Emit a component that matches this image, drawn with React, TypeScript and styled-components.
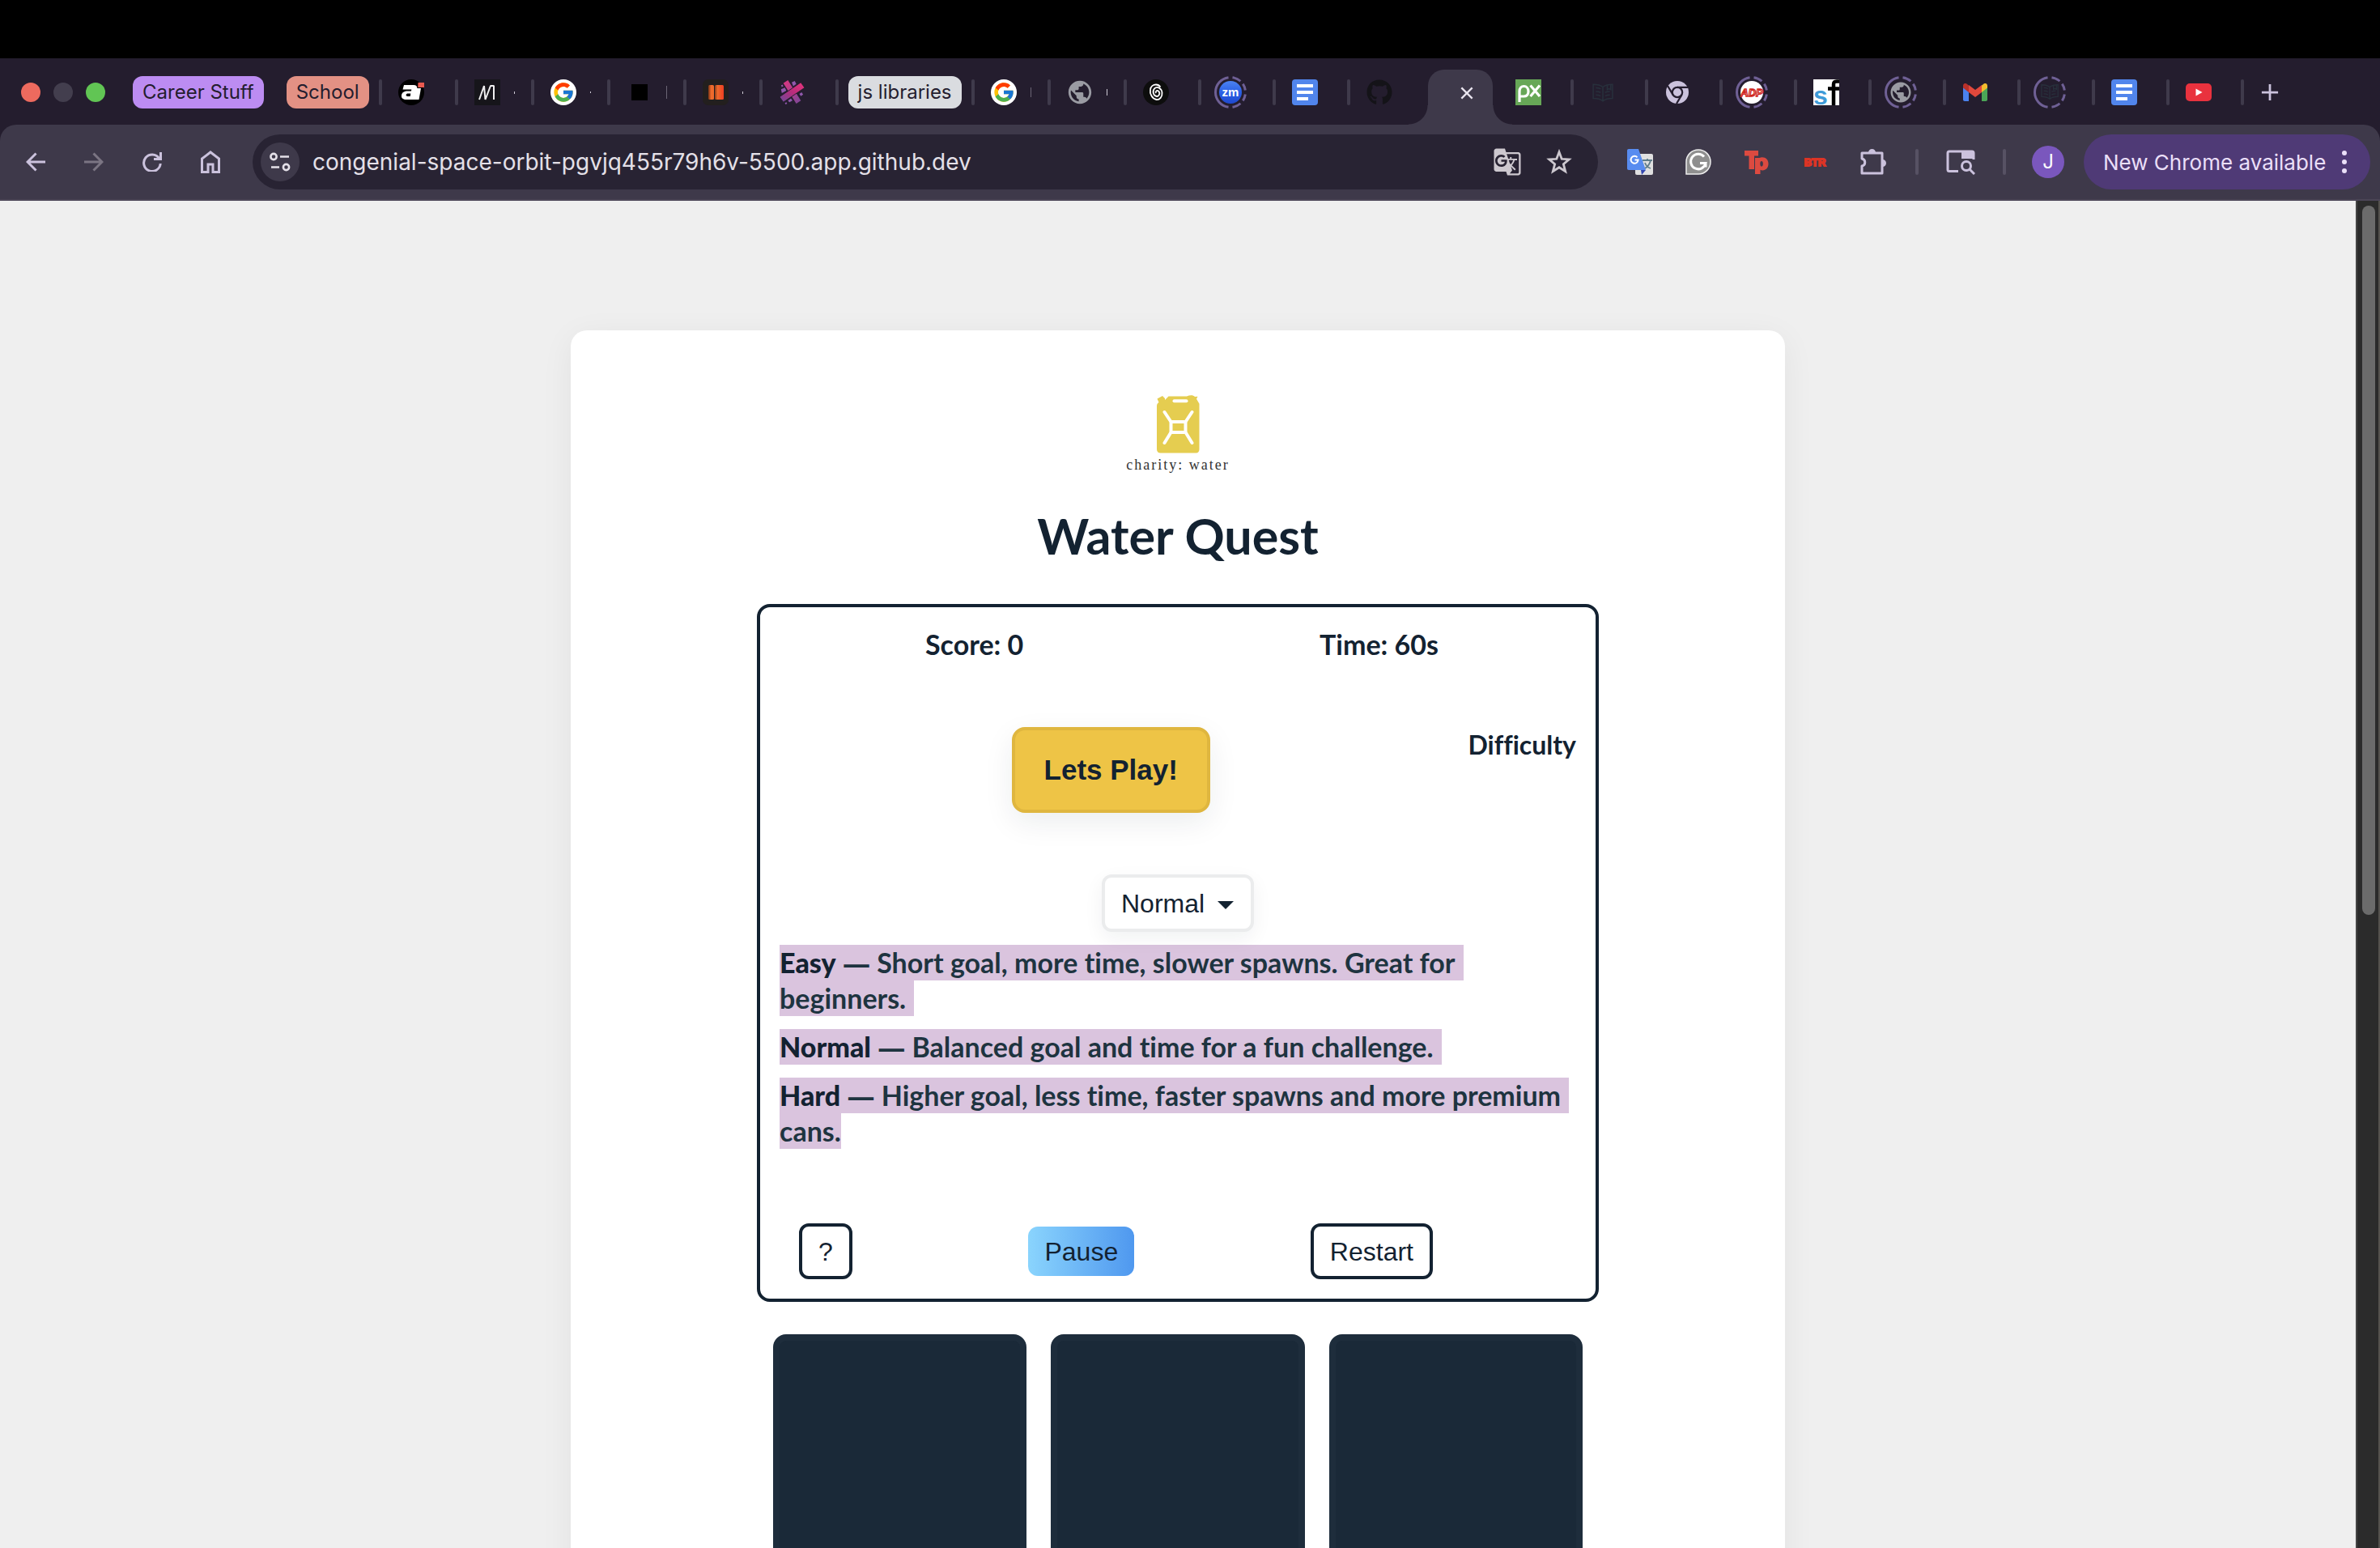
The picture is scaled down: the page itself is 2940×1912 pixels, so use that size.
import React from "react";
import styled, { createGlobalStyle, css } from "styled-components";
import { FcGoogle } from "react-icons/fc";
import { FaGithub } from "react-icons/fa";
import { MdPublic, MdGTranslate } from "react-icons/md";

const ink = "#132231";
const chromeFont = `Inter, Roboto, "Liberation Sans", sans-serif`;
const pageFont = `Lato, "Open Sans", "Liberation Sans", sans-serif`;
const buttonFont = `"Liberation Sans", Arial, sans-serif`;

const GlobalStyle = createGlobalStyle`
  *, *::before, *::after { box-sizing: border-box; }
  body { margin: 0; background: #000; }
  button, input, select { font: inherit; color: inherit; margin: 0; padding: 0; border: 0; background: none; }
  h1, p { margin: 0; }
  svg { display: block; }
`;

const Screen = styled.div`
  display: flex;
  flex-direction: column;
  height: 100vh;
  padding-top: 72px;
  overflow: hidden;
  background: #000;
`;

/* ---------- tab strip ---------- */

const TabStrip = styled.div`
  display: flex;
  align-items: center;
  flex: none;
  height: 82px;
  padding: 2px 0 0 26px;
  background: #241d2e;
  font-family: ${chromeFont};
`;

const WindowControls = styled.div`
  display: flex;
  gap: 16px;
  margin-right: 34px;
`;

const Light = styled.button<{ $color: string }>`
  width: 24px;
  height: 24px;
  border-radius: 50%;
  background: ${(p) => p.$color};
`;

const GroupPill = styled.button<{ $color: string }>`
  flex: none;
  height: 40px;
  padding: 0 12px;
  margin-right: 12px;
  border-radius: 12px;
  background: ${(p) => p.$color};
  color: #241d2e;
  font-size: 24px;
  line-height: 40px;
  white-space: nowrap;
`;

const PillSpacer = styled.div<{ $w: number }>`
  flex: none;
  width: ${(p) => p.$w}px;
`;

const Divider = styled.div`
  flex: none;
  width: 4px;
  height: 32px;
  border-radius: 2px;
  background: #3f3a4b;
`;

const TabItem = styled.div<{ $width: number }>`
  display: flex;
  align-items: center;
  flex: none;
  width: ${(p) => p.$width}px;
`;

const Favicon = styled.button`
  display: grid;
  place-items: center;
  flex: none;
  width: 40px;
  height: 40px;
  margin-left: 16px;
`;

const HiddenDivider = styled(Divider)`
  background: transparent;
`;

const TitleRemnant = styled.span<{ $h: number; $dim?: boolean }>`
  width: 1px;
  height: ${(p) => p.$h}px;
  margin-left: 13px;
  background: ${(p) => (p.$dim ? "#6b6575" : "#cfcbd6")};
`;

const ActiveTab = styled.div`
  position: relative;
  display: grid;
  place-items: center;
  align-self: stretch;
  flex: none;
  width: 80px;
  margin: 12px 4px 0 8px;
  padding: 0 0 10px 16px;
  border-radius: 20px 20px 0 0;
  background: #3e394a;

  &::before,
  &::after {
    content: "";
    position: absolute;
    bottom: 0;
    width: 24px;
    height: 24px;
  }
  &::before {
    right: 100%;
    background: radial-gradient(circle at 0 0, transparent 23px, #3e394a 24px);
  }
  &::after {
    left: 100%;
    background: radial-gradient(circle at 100% 0, transparent 23px, #3e394a 24px);
  }
`;

const IconButton = styled.button<{ $color?: string }>`
  display: grid;
  place-items: center;
  color: ${(p) => p.$color ?? "#cbc2dd"};
`;

const NewTab = styled(IconButton)`
  margin-left: 16px;
  width: 32px;
  height: 32px;
`;

/* ---------- toolbar ---------- */

const ToolbarBack = styled.div`
  flex: none;
  background: #241d2e;
`;

const Toolbar = styled.div`
  display: flex;
  align-items: center;
  height: 94px;
  padding: 0 12px 0 20px;
  border-bottom: 2px solid #4b4556;
  border-radius: 20px 20px 0 0;
  background: #3e394a;
  font-family: ${chromeFont};
`;

const NavButtons = styled.div`
  display: flex;
  gap: 24px;
  margin-right: 28px;
`;

const NavButton = styled(IconButton)`
  width: 48px;
  height: 48px;
`;

const Omnibox = styled.div`
  display: flex;
  align-items: center;
  flex: 1;
  height: 68px;
  padding: 0 30px 0 10px;
  border-radius: 34px;
  background: #282333;
`;

const SiteInfo = styled(IconButton)`
  flex: none;
  width: 48px;
  height: 48px;
  margin-right: 16px;
  border-radius: 50%;
  background: #3e394a;
`;

const Address = styled.input`
  flex: 1;
  min-width: 0;
  height: 48px;
  color: #e4e0e8;
  font-size: 28px;
  outline: none;
`;

const OmniActions = styled.div`
  display: flex;
  gap: 28px;
`;

const Extensions = styled.div`
  display: flex;
  align-items: center;
  gap: 36px;
  margin: 0 34px;
`;

const ExtensionButton = styled(IconButton)`
  width: 36px;
  height: 40px;
`;

const ToolDivider = styled(Divider)`
  background: #575264;
`;

const SidePanelGroup = styled.div`
  display: flex;
  align-items: center;
  gap: 34px;
`;

const Avatar = styled.button`
  flex: none;
  width: 40px;
  height: 40px;
  margin: 0 24px 0 32px;
  border-radius: 50%;
  background: #7a57bd;
  color: #fff;
  font-size: 24px;
  line-height: 40px;
`;

const UpdatePill = styled.button`
  display: flex;
  align-items: center;
  justify-content: space-between;
  flex: none;
  width: 354px;
  height: 68px;
  padding: 0 28px 0 24px;
  border-radius: 34px;
  background: #4f3a76;
  color: #eadff8;
  font-size: 26px;
  white-space: nowrap;
`;

/* ---------- page ---------- */

const Viewport = styled.div`
  display: flex;
  flex: 1;
  min-height: 0;
  background: #efefef;
`;

const Page = styled.main`
  flex: 1;
  min-width: 0;
  padding: 160px 24px;
  overflow: hidden;
  font-family: ${pageFont};
  font-variant-ligatures: none;
  color: ${ink};
`;

const Card = styled.section`
  display: flex;
  flex-direction: column;
  align-items: center;
  max-width: 1500px;
  margin: 0 auto;
  padding: 80px 40px;
  border-radius: 20px;
  background: #fff;
  box-shadow: 0 8px 40px rgba(0, 0, 0, 0.06);
`;

const Brand = styled.div`
  display: flex;
  flex-direction: column;
  align-items: center;
  gap: 2px;
`;

const BrandName = styled.span`
  color: #333;
  font-family: "Liberation Serif", "Times New Roman", serif;
  font-size: 18px;
  line-height: 24px;
  letter-spacing: 2px;
`;

const Title = styled.h1`
  margin: 40px 0 48px;
  font-size: 61px;
  font-weight: 700;
  line-height: 72px;
`;

const Panel = styled.div`
  display: flex;
  flex-direction: column;
  width: 100%;
  max-width: 1040px;
  padding: 24px;
  border: 4px solid ${ink};
  border-radius: 16px;
  font-size: 34px;
  font-weight: 700;
  line-height: 44px;
`;

const Stats = styled.div`
  display: flex;
  justify-content: space-between;
  padding: 0 170px 0 180px;
`;

const PlayRow = styled.div`
  display: flex;
  align-items: flex-start;
  gap: 32px;
  margin-top: 80px;
`;

const PlayArea = styled.div`
  display: flex;
  justify-content: center;
  flex: 1;
`;

const DifficultyLabel = styled.label`
  font-size: 32px;
`;

const PlayButton = styled.button`
  height: 106px;
  padding: 0 36px;
  border: 4px solid #dfb63f;
  border-radius: 16px;
  background: #eec446;
  box-shadow: 0 12px 36px rgba(19, 34, 49, 0.08);
  font-family: ${buttonFont};
  font-size: 35px;
  font-weight: 700;
`;

const SelectWrap = styled.div`
  position: relative;
  align-self: center;
  margin: 76px 0 16px;
`;

const DifficultySelect = styled.select`
  display: block;
  appearance: none;
  width: 188px;
  height: 71px;
  padding: 0 20px;
  border: 4px solid #ebeced;
  border-radius: 12px;
  background: #fff;
  box-shadow: 0 8px 24px rgba(19, 34, 49, 0.06);
  font-family: ${buttonFont};
  font-size: 32px;
  font-weight: 400;
`;

const Caret = styled.svg`
  position: absolute;
  right: 25px;
  top: 33px;
  pointer-events: none;
`;

const Notes = styled.div`
  display: flex;
  flex-direction: column;
  gap: 16px;
  color: #1e3440;
`;

const NoteLine = styled.span<{ $last?: boolean }>`
  display: block;
  width: fit-content;
  height: 44px;
  padding-right: ${(p) => (p.$last ? 0 : 10)}px;
  background: #dac4de;
  white-space: nowrap;
`;

const Level = styled.strong`
  color: ${ink};
  font-weight: 900;
`;

const Dash = styled.span`
  font-family: "Open Sans", sans-serif;
`;

const Controls = styled.div`
  display: flex;
  align-items: center;
  justify-content: space-between;
  margin-top: 92px;
  padding: 0 177px 0 24px;
`;

const outline = css`
  height: 69px;
  border: 4px solid ${ink};
  background: #fff;
`;

const fill = css`
  height: 61px;
  background: linear-gradient(90deg, #8ad4fd, #4f98ef);
`;

const ControlButton = styled.button<{ $filled?: boolean }>`
  padding: 0 20px;
  border-radius: 12px;
  font-family: ${buttonFont};
  font-size: 32px;
  font-weight: 400;
  ${(p) => (p.$filled ? fill : outline)}
`;

const Board = styled.div`
  display: grid;
  grid-template-columns: repeat(3, 1fr);
  gap: 30px;
  width: 100%;
  max-width: 1000px;
  margin-top: 40px;
`;

const Cell = styled.div`
  aspect-ratio: 1;
  border: 8px solid #1e2d3c;
  border-radius: 16px;
  background: #1a2938;
`;

const ScrollTrack = styled.div`
  flex: none;
  width: 30px;
  padding: 6px 4px 6px 6px;
  border-left: 2px solid #454545;
  border-right: 2px solid #55524e;
  background: #2b2b2b;
`;

const ScrollThumb = styled.div`
  width: 16px;
  height: 53%;
  border-radius: 8px;
  background: #6b6b6b;
`;

/* ---------- icons ---------- */

const Ring = ({ children }: { children: React.ReactNode }) => (
  <svg width="40" height="40" viewBox="0 0 40 40">
    <circle cx="20" cy="20" r="18.5" fill="none" stroke="#6f6095" strokeWidth="3" pathLength={360}
      strokeDasharray="0 8 34 14 26 16 26 14 34 16 164 8" transform="rotate(-90 20 20)" />
    {children}
  </svg>
);

const SvgText = styled.text`
  font-family: "Liberation Sans", Arial, sans-serif;
  font-weight: 700;
`;

const AiIcon = () => (
  <svg width="32" height="32" viewBox="0 0 32 32">
    <circle cx="16" cy="16" r="16" fill="#000" />
    <path fillRule="evenodd" d="M7 7h12c3.500 0 4.800 2 4.200 5L21 25H10c-4.500 0-6.500-2-6-5.500.6-3.600 3.600-5 7.500-5H16l.3-2H5.500zM15.300 17.500H12c-1.400 0-2.200.5-2.400 1.700-.2 1.100.5 1.800 1.900 1.800h3.200z" fill="#fff" />
    <path d="M22.500 11H28l-2.500 14H20z" fill="#fff" />
    <path d="M24.500 4H32v6h-7.800z" fill="#ea5a50" />
  </svg>
);

const MIcon = () => (
  <svg width="32" height="32" viewBox="0 0 32 32">
    <path d="M0 0h32v32H0z" fill="#16151a" />
    <path d="M6 25L12 8l1.500 17L20 8h4v17" stroke="#eee" strokeWidth="2" fill="none" strokeLinejoin="bevel" />
  </svg>
);

const GoogleIcon = () => (
  <svg width="32" height="32" viewBox="0 0 32 32">
    <circle cx="16" cy="16" r="16" fill="#fff" />
    <FcGoogle x={2} y={2} width={28} height={28} size={28} />
  </svg>
);

const SquareIcon = () => (
  <svg width="20" height="20" viewBox="0 0 20 20"><path d="M0 0h20v20H0z" fill="#000" /></svg>
);

const BarsIcon = () => (
  <svg width="32" height="32" viewBox="0 0 32 32">
    <defs>
      <linearGradient id="bar1"><stop offset="0" stopColor="#7a3416" /><stop offset=".5" stopColor="#ee6a2c" /><stop offset="1" stopColor="#ee6a2c" /></linearGradient>
      <linearGradient id="bar2"><stop offset="0" stopColor="#8a3a18" /><stop offset=".3" stopColor="#ee6a2c" /><stop offset="1" stopColor="#ee3e22" /></linearGradient>
    </defs>
    <rect width="32" height="32" rx="7" fill="#231f1e" />
    <rect x="7" y="7" width="7" height="18" rx="1.500" fill="url(#bar1)" />
    <rect x="15" y="7" width="11" height="18" rx="1.500" fill="url(#bar2)" />
  </svg>
);

const CrossIcon = () => (
  <svg width="32" height="32" viewBox="0 0 34 34">
    <defs>
      <linearGradient id="cross" x1="1" y1="0" x2="0" y2="1"><stop offset="0" stopColor="#e8357c" /><stop offset=".5" stopColor="#b82c7c" /><stop offset="1" stopColor="#684c9c" /></linearGradient>
      <linearGradient id="cross2" x1="0" y1="0" x2="1" y2="1"><stop offset="0" stopColor="#dd3580" /><stop offset="1" stopColor="#7a4798" /></linearGradient>
    </defs>
    <path d="M6 5l6-4 17 27-6 4z" fill="url(#cross2)" />
    <path d="M1 23L29 4l5 7L6 30z" fill="url(#cross)" stroke="#241d2e" strokeWidth="1" />
    <path d="M17 4l4-2 2 4-4 3zM3 13l5-2 2 4-6 3zM27 19l3-2 2 3-3 2zM12 28l4-3 2 3-4 2zM3 8l2-1 1 2-2 1zM8 31l2-1 1 2-2 1z" fill="#9058ac" />
  </svg>
);

const SpiralIcon = () => (
  <svg width="32" height="32" viewBox="0 0 32 32">
    <circle cx="16" cy="16" r="16" fill="#0d0d0d" />
    <path d="M16 17c-1-2 1-4 3-2.500 2.500 2 1 6.500-2 6.500-4 0-6-6-3-9.500 3.500-3.500 9-.5 9.500 5 .5 5-3 9-7 8.500-5-.8-8.500-7-7.500-12.500C9.500 9 12.500 6.500 16 6.500c2.500 0 4.500 1.500 5.500 3" fill="none" stroke="#fff" strokeWidth="1.800" />
  </svg>
);

const ZoomIcon = () => (
  <Ring>
    <defs><linearGradient id="zm" x1="0" y1="0" x2="0" y2="1"><stop offset="0" stopColor="#4d83f0" /><stop offset=".5" stopColor="#2a60e6" /><stop offset="1" stopColor="#1f49cf" /></linearGradient></defs>
    <circle cx="20" cy="20" r="14" fill="url(#zm)" />
    <SvgText x="20" y="25" fontSize="15" fill="#fff" textAnchor="middle">zm</SvgText>
  </Ring>
);

const DocsIcon = () => (
  <svg width="32" height="32" viewBox="0 0 32 32">
    <rect width="32" height="32" rx="4" fill="#5185ec" />
    <path d="M6 6h20v4H6zM6 14h20v4H6zM6 22h14v4H6z" fill="#fff" />
  </svg>
);

const PxIcon = () => (
  <svg width="32" height="32" viewBox="0 0 32 32">
    <path d="M0 0h32v32H0z" fill="#67a757" />
    <path d="M5 28V15c0-4.500 2.500-6.500 5.500-6.500S16 11 16 15s-2.500 6-5.500 6H6M18.500 7.500L30 21M30 7.500L18.500 21" fill="none" stroke="#fff" strokeWidth="3.200" />
  </svg>
);

const bookPath = "M12 6C9 3.500 5 3 1 3v16c4 0 8 .5 11 3 3-2.500 7-3 11-3V3c-4 0-8 .5-11 3zM12 6v16M4 7c2 0 4 .4 5.500 1.200M4 11c2 0 4 .4 5.500 1.200M4 15c2 0 4 .4 5.500 1.200M20 11c-2 0-4 .4-5.500 1.200M20 15c-2 0-4 .4-5.500 1.200M17 4v5l2-1 2 1V3";

const BookIcon = () => (
  <svg width="26" height="26" viewBox="0 0 24 24"><path d={bookPath} fill="none" stroke="#28303c" strokeWidth="1.400" /></svg>
);

const RingBookIcon = () => (
  <Ring><g transform="translate(9 8) scale(.92)"><path d={bookPath} fill="none" stroke="#28303c" strokeWidth="1.400" /></g></Ring>
);

const ChromeIcon = () => (
  <svg width="28" height="28" viewBox="0 0 28 28">
    <circle cx="14" cy="14" r="14" fill="#cbc2dd" />
    <g fill="none" stroke="#241d2e" strokeWidth="2.200">
      <circle cx="14" cy="14" r="6.200" />
      <path d="M14 7.800h13M8.600 17.100L2 6M19.400 17.100L13 28" />
    </g>
  </svg>
);

const AdpIcon = () => (
  <Ring>
    <circle cx="20" cy="20" r="14" fill="#fff" />
    <SvgText x="20" y="25" fontSize="13" fontStyle="italic" fill="#fff" stroke="#d0271d" strokeWidth="1.300" textAnchor="middle">ADP</SvgText>
  </Ring>
);

const SfIcon = () => (
  <svg width="32" height="32" viewBox="0 0 32 32">
    <path d="M0 0h32v32H0z" fill="#fff" />
    <SvgText x="0" y="31" fontSize="32" fill="#3f9bd8">s</SvgText>
    <path d="M32 2.500h-3c-3 0-4 1-4 4V32M18 11.500h14" fill="none" stroke="#000" strokeWidth="4.500" />
  </svg>
);

const RingGlobeIcon = () => (
  <Ring>
    <MdPublic x={5} y={5} width={30} height={30} size={30} color="#9a9ba3" />
  </Ring>
);

const GmailIcon = () => (
  <svg width="30" height="22" viewBox="0 0 30 22">
    <path d="M0 3v17c0 1.200.8 2 2 2h5V8z" fill="#4b82ee" />
    <path d="M30 3v17c0 1.200-.8 2-2 2h-5V8z" fill="#4ba657" />
    <path d="M7 2v9l8 6 8-6V2l-8 6z" fill="#e0483c" />
    <path d="M0 3c0-3 3-4 5-2l2 1.500V11L0 5.500z" fill="#b8312a" />
    <path d="M30 3c0-3-3-4-5-2l-2 1.500V11l7-5.500z" fill="#f3bc2e" />
  </svg>
);

const YoutubeIcon = () => (
  <svg width="32" height="22" viewBox="0 0 32 22">
    <rect width="32" height="22" rx="5" fill="#e9323e" />
    <path d="M12.500 6.500v9l8-4.500z" fill="#fff" />
  </svg>
);

type Stroke = { d: string; w?: number; s?: number };
const Line = ({ d, w = 24, s = 3 }: Stroke) => (
  <svg width={w} height={w} viewBox="0 0 24 24" fill="none" stroke="currentColor" strokeWidth={s}><path d={d} /></svg>
);

const ReloadIcon = () => (
  <svg width="24" height="24" viewBox="0 0 24 24">
    <path d="M20.500 7.500A10.300 10.300 0 1 0 22.200 14" fill="none" stroke="currentColor" strokeWidth="3" />
    <path d="M21 0h3v10H14V7h7z" fill="currentColor" />
  </svg>
);

const HomeIcon = () => (
  <svg width="24" height="28" viewBox="0 0 24 28">
    <path d="M1.500 26.500V10L12 2l10.500 8v16.500H15V17H9v9.500z" fill="none" stroke="currentColor" strokeWidth="3" />
  </svg>
);

const TuneIcon = () => (
  <svg width="26" height="24" viewBox="0 0 26 24" fill="none" stroke="#e4e0e8" strokeWidth="2.600">
    <circle cx="5" cy="5.500" r="3.600" /><path d="M13 5.500h11M2 18.500h10" /><circle cx="20.500" cy="18.500" r="3.600" />
  </svg>
);

const StarIcon = () => (
  <svg width="32" height="32" viewBox="0 0 30 30">
    <path d="M15 3.500l3 8 8.500.6-6.500 5.400 2.200 8.500L15 21.300 7.800 26 10 17.500l-6.500-5.400 8.500-.6z" fill="none" stroke="#cdc8cf" strokeWidth="2.600" />
  </svg>
);

const TranslateColorIcon = () => (
  <svg width="32" height="32" viewBox="0 0 32 32">
    <rect x="10" y="6" width="22" height="26" rx="2" fill="#e0e0e0" />
    <path d="M19 14h12M25 12v2M29 14c-1 5-4 8-7 10M22 17c1 3 4 6 7 7" stroke="#5f7d8a" strokeWidth="1.800" fill="none" />
    <path d="M17 26h6l-5 6z" fill="#3447ae" />
    <path d="M2 0h12l9 26H2c-1.200 0-2-.8-2-2V2C0 .8.800 0 2 0z" fill="#588cf0" />
    <path d="M12.500 10.300A4.500 4.500 0 1 0 13.600 13.500H9.500" fill="none" stroke="#fff" strokeWidth="2" />
  </svg>
);

const GrammarlyIcon = () => (
  <svg width="32" height="32" viewBox="0 0 32 32">
    <path d="M16 1a15 15 0 1 1 0 30H1V16A15 15 0 0 1 16 1z" fill="#8f8f8f" stroke="#eee" strokeWidth="1.500" />
    <path d="M23 9.500A9.300 9.300 0 1 0 25 17.500h-7M25 16.500v6" fill="none" stroke="#fff" strokeWidth="3" />
  </svg>
);

const TpIcon = () => (
  <svg width="30" height="30" viewBox="0 0 30 30">
    <path d="M0 1h17v6.500h-5V24H5.500V7.500H0z" fill="#dc4a40" />
    <path fillRule="evenodd" d="M13 10h5.500c1-.6 2-.8 3.200-.8 4.800 0 7.800 3.200 7.800 8s-3 8.200-7.300 8.200c-1.200 0-2-.2-2.700-.6V30H13zM21 14c-1 0-1.700.8-1.700 3.200s.7 3.400 1.700 3.400 1.900-1 1.900-3.400S22 14 21 14z" fill="#dc4a40" />
  </svg>
);

const BtrIcon = () => (
  <svg width="32" height="14" viewBox="0 0 32 14">
    <SvgText x="16" y="12" fontSize="13" fill="#dd3425" stroke="#dd3425" strokeWidth="1.800" textAnchor="middle">BTR</SvgText>
  </svg>
);

const PuzzleIcon = () => (
  <svg width="34" height="34" viewBox="0 0 34 34">
    <path d="M3 6h25v25H3v-9c5-1 5-8 0-9z" fill="none" stroke="currentColor" strokeWidth="3" strokeLinejoin="round" />
    <path d="M11 5.500a4.500 4.500 0 0 1 9 0zM28.500 14a4.500 4.500 0 0 1 0 9z" fill="currentColor" />
  </svg>
);

const SidePanelIcon = () => (
  <svg width="36" height="32" viewBox="0 0 36 32">
    <path d="M15 27.500H4c-1.200 0-2-.8-2-2V5c0-1.200.8-2 2-2h28c1.200 0 2 .8 2 2v8" fill="none" stroke="currentColor" strokeWidth="3" />
    <path d="M19 3h15v9H19z" fill="currentColor" />
    <circle cx="25" cy="21" r="5.500" fill="none" stroke="currentColor" strokeWidth="3" />
    <path d="M29 25l6 6" stroke="currentColor" strokeWidth="3" />
  </svg>
);

const DotsIcon = () => (
  <svg width="8" height="28" viewBox="0 0 8 28" fill="currentColor">
    <circle cx="4" cy="3" r="3" /><circle cx="4" cy="14" r="3" /><circle cx="4" cy="25" r="3" />
  </svg>
);

const JerryCan = () => (
  <svg width="54" height="72" viewBox="0 0 54 72">
    <path d="M1 13.500C1 11 2 10 3.500 9L1.500 4.500 8 1l3 3v2l4.500-4.500H38C42-.5 46-.3 48 2l3.500-.2-1.500 3 3.500 6V67c0 2.500-1.500 4.500-4 4.500h-44C2.500 71.500 1 69.500 1 67z" fill="#e5cd50" />
    <g fill="none" stroke="#fff" strokeWidth="4" strokeLinecap="round" strokeLinejoin="round">
      <path d="M22.500 7.200h15" />
      <rect x="18.500" y="33" width="18" height="13" rx="1.500" />
      <path d="M18.500 33L10.500 21M36.500 33l8-12M18.500 46l-8 13M36.500 46l8 13" />
    </g>
  </svg>
);

/* ---------- tabs ---------- */

type TabProps = { name: string; icon: React.ReactNode; width?: number; mark?: number; dim?: boolean; first?: boolean };
const Tab = ({ name, icon, width = 92, mark, dim, first }: TabProps) => (
  <TabItem $width={width}>
    {first ? <HiddenDivider /> : <Divider />}
    <Favicon aria-label={name}>{icon}</Favicon>
    {mark ? <TitleRemnant $h={mark} $dim={dim} /> : null}
  </TabItem>
);

export default function App() {
  return (
    <Screen>
      <GlobalStyle />
      <TabStrip>
        <WindowControls>
          <Light $color="#ed6a5e" aria-label="Close window" />
          <Light $color="#433e4e" aria-label="Minimize window" />
          <Light $color="#61c554" aria-label="Zoom window" />
        </WindowControls>
        <GroupPill $color="#bc8cf2">Career Stuff</GroupPill>
        <PillSpacer $w={16} />
        <GroupPill $color="#e39184">School</GroupPill>
        <Tab name="ai" width={94} icon={<AiIcon />} />
        <Tab name="M" width={94} icon={<MIcon />} mark={3} />
        <Tab name="Google" width={94} icon={<GoogleIcon />} mark={2} />
        <Tab name="Square" width={94} icon={<SquareIcon />} mark={16} dim />
        <Tab name="Bars" width={94} icon={<BarsIcon />} mark={3} />
        <Tab name="Cross" width={94} icon={<CrossIcon />} />
        <Divider />
        <PillSpacer $w={12} />
        <GroupPill $color="#dadce0">js libraries</GroupPill>
        <Tab name="Google search" width={94} icon={<GoogleIcon />} mark={12} dim />
        <Tab name="Web" width={94} icon={<MdPublic size={34} color="#9a9ba3" />} mark={8} />
        <Tab name="Spiral" icon={<SpiralIcon />} />
        <Tab name="Zoom" icon={<ZoomIcon />} />
        <Tab name="Docs" icon={<DocsIcon />} />
        <Tab name="GitHub" icon={<FaGithub size={32} color="#141318" />} />
        <ActiveTab>
          <IconButton aria-label="Close tab" $color="#e8e4ee"><Line w={16} s={3.5} d="M2 2l20 20M22 2L2 22" /></IconButton>
        </ActiveTab>
        <Tab name="px" first icon={<PxIcon />} />
        <Tab name="Book" icon={<BookIcon />} />
        <Tab name="Chrome" icon={<ChromeIcon />} />
        <Tab name="ADP" icon={<AdpIcon />} />
        <Tab name="sf" icon={<SfIcon />} />
        <Tab name="Site" icon={<RingGlobeIcon />} />
        <Tab name="Gmail" icon={<GmailIcon />} />
        <Tab name="Reader" icon={<RingBookIcon />} />
        <Tab name="Docs file" icon={<DocsIcon />} />
        <Tab name="YouTube" icon={<YoutubeIcon />} />
        <Divider />
        <NewTab aria-label="New tab"><Line w={22} s={3} d="M12 1v22M1 12h22" /></NewTab>
      </TabStrip>

      <ToolbarBack>
        <Toolbar>
          <NavButtons>
            <NavButton aria-label="Back"><Line d="M24 12H2M12.500 1.500L2 12l10.500 10.500" /></NavButton>
            <NavButton aria-label="Forward" $color="#7b7583"><Line d="M0 12h22M11.500 1.500L22 12 11.500 22.500" /></NavButton>
            <NavButton aria-label="Reload"><ReloadIcon /></NavButton>
            <NavButton aria-label="Home"><HomeIcon /></NavButton>
          </NavButtons>
          <Omnibox>
            <SiteInfo aria-label="Site information"><TuneIcon /></SiteInfo>
            <Address aria-label="Address" defaultValue="congenial-space-orbit-pgvjq455r79h6v-5500.app.github.dev" />
            <OmniActions>
              <ExtensionButton aria-label="Translate page" $color="#cdc8cf"><MdGTranslate size={36} /></ExtensionButton>
              <ExtensionButton aria-label="Bookmark"><StarIcon /></ExtensionButton>
            </OmniActions>
          </Omnibox>
          <Extensions>
            <ExtensionButton aria-label="Google Translate"><TranslateColorIcon /></ExtensionButton>
            <ExtensionButton aria-label="Grammarly"><GrammarlyIcon /></ExtensionButton>
            <ExtensionButton aria-label="Tp"><TpIcon /></ExtensionButton>
            <ExtensionButton aria-label="BTR"><BtrIcon /></ExtensionButton>
            <ExtensionButton aria-label="Extensions"><PuzzleIcon /></ExtensionButton>
          </Extensions>
          <SidePanelGroup>
            <ToolDivider />
            <ExtensionButton aria-label="Side panel"><SidePanelIcon /></ExtensionButton>
            <ToolDivider />
          </SidePanelGroup>
          <Avatar>J</Avatar>
          <UpdatePill>New Chrome available<DotsIcon /></UpdatePill>
        </Toolbar>
      </ToolbarBack>

      <Viewport>
        <Page>
          <Card>
            <Brand>
              <JerryCan />
              <BrandName>charity: water</BrandName>
            </Brand>
            <Title>Water Quest</Title>
            <Panel>
              <Stats>
                <span>Score: 0</span>
                <span>Time: 60s</span>
              </Stats>
              <PlayRow>
                <PlayArea><PlayButton>Lets Play!</PlayButton></PlayArea>
                <DifficultyLabel htmlFor="difficulty">Difficulty</DifficultyLabel>
              </PlayRow>
              <SelectWrap>
                <DifficultySelect id="difficulty" defaultValue="Normal">
                  <option>Easy</option>
                  <option>Normal</option>
                  <option>Hard</option>
                </DifficultySelect>
                <Caret width="20" height="10" viewBox="0 0 20 10"><path d="M0 0h20L10 10z" fill={ink} /></Caret>
              </SelectWrap>
              <Notes>
                <p>
                  <NoteLine><Level>Easy</Level> <Dash>—</Dash> Short goal, more time, slower spawns. Great for</NoteLine>
                  <NoteLine>beginners.</NoteLine>
                </p>
                <p>
                  <NoteLine><Level>Normal</Level> <Dash>—</Dash> Balanced goal and time for a fun challenge.</NoteLine>
                </p>
                <p>
                  <NoteLine><Level>Hard</Level> <Dash>—</Dash> Higher goal, less time, faster spawns and more premium</NoteLine>
                  <NoteLine $last>cans.</NoteLine>
                </p>
              </Notes>
              <Controls>
                <ControlButton>?</ControlButton>
                <ControlButton $filled>Pause</ControlButton>
                <ControlButton>Restart</ControlButton>
              </Controls>
            </Panel>
            <Board>
              {Array.from({ length: 9 }, (_, i) => <Cell key={i} />)}
            </Board>
          </Card>
        </Page>
        <ScrollTrack><ScrollThumb /></ScrollTrack>
      </Viewport>
    </Screen>
  );
}
